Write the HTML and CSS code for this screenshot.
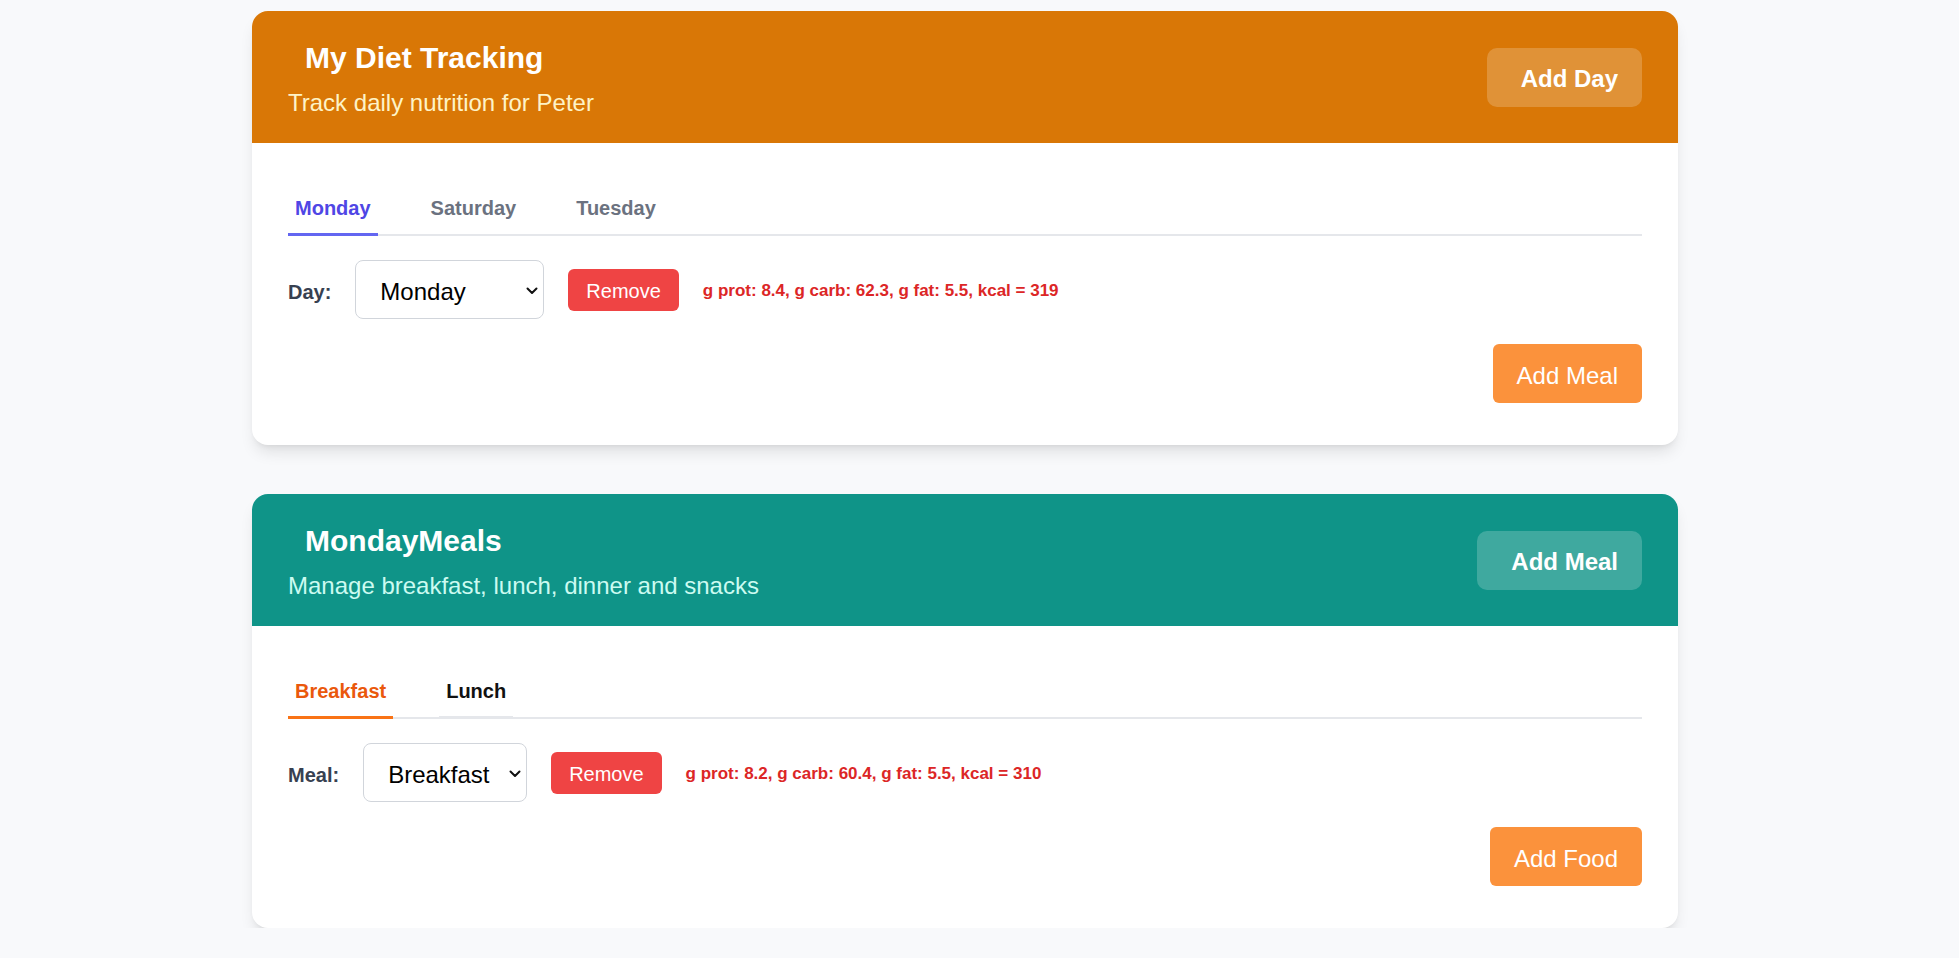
FILE: index.html
```html
<!DOCTYPE html>
<html lang="en">
<head>
<meta charset="utf-8">
<title>My Diet Tracking</title>
<link rel="stylesheet" href="styles.css">
</head>
<body>
<main class="page">
  <section class="card">
    <header class="card-head head-orange">
      <div class="head-text">
        <h1 class="head-title">My Diet Tracking</h1>
        <p class="head-sub sub-amber">Track daily nutrition for Peter</p>
      </div>
      <button class="head-btn" type="button">Add Day</button>
    </header>
    <div class="card-body">
      <nav class="tabs">
        <button class="tab tab-indigo-active" type="button">Monday</button>
        <button class="tab tab-muted" type="button">Saturday</button>
        <button class="tab tab-muted" type="button">Tuesday</button>
      </nav>
      <div class="row">
        <label class="row-label">Day:</label>
        <div class="select-wrap select-day">
          <select class="select">
            <option>Monday</option>
            <option>Tuesday</option>
            <option>Wednesday</option>
            <option>Thursday</option>
            <option>Friday</option>
            <option>Saturday</option>
            <option>Sunday</option>
          </select>
          <svg class="chev" width="12" height="8" viewBox="0 0 12 8"><path d="M1.5 1.5 L6 6 L10.5 1.5" fill="none" stroke="#111" stroke-width="2" stroke-linecap="round" stroke-linejoin="round"/></svg>
        </div>
        <button class="btn-remove" type="button">Remove</button>
        <span class="stats">g prot: 8.4, g carb: 62.3, g fat: 5.5, kcal = 319</span>
      </div>
      <div class="actions">
        <button class="btn-add" type="button">Add Meal</button>
      </div>
    </div>
  </section>

  <section class="card">
    <header class="card-head head-teal">
      <div class="head-text">
        <h1 class="head-title">MondayMeals</h1>
        <p class="head-sub sub-teal">Manage breakfast, lunch, dinner and snacks</p>
      </div>
      <button class="head-btn" type="button">Add Meal</button>
    </header>
    <div class="card-body">
      <nav class="tabs">
        <button class="tab tab-orange-active" type="button">Breakfast</button>
        <button class="tab tab-plain" type="button">Lunch</button>
      </nav>
      <div class="row">
        <label class="row-label">Meal:</label>
        <div class="select-wrap select-meal">
          <select class="select">
            <option>Breakfast</option>
            <option>Lunch</option>
            <option>Dinner</option>
            <option>Snacks</option>
          </select>
          <svg class="chev" width="12" height="8" viewBox="0 0 12 8"><path d="M1.5 1.5 L6 6 L10.5 1.5" fill="none" stroke="#111" stroke-width="2" stroke-linecap="round" stroke-linejoin="round"/></svg>
        </div>
        <button class="btn-remove" type="button">Remove</button>
        <span class="stats">g prot: 8.2, g carb: 60.4, g fat: 5.5, kcal = 310</span>
      </div>
      <div class="actions">
        <button class="btn-add" type="button">Add Food</button>
      </div>
    </div>
  </section>
</main>
</body>
</html>
```

FILE: styles.css
```css
* { box-sizing: border-box; }

html, body {
  margin: 0;
  padding: 0;
  background: #f8f9fb;
  font-family: "Liberation Sans", Arial, sans-serif;
}

.page {
  width: 1426px;
  margin-left: 252px;
  padding-top: 11px;
  display: flex;
  flex-direction: column;
  gap: 49px;
}

.card {
  background: #ffffff;
  border-radius: 16px;
  overflow: hidden;
  box-shadow: 0 10px 15px -3px rgba(0, 0, 0, 0.1), 0 4px 6px -4px rgba(0, 0, 0, 0.1);
}

.card-head {
  height: 132px;
  display: flex;
  align-items: center;
  justify-content: space-between;
  padding: 0 36px;
}

.head-orange { background: #d97706; }
.head-teal { background: #0f9488; }

.head-text {
  display: flex;
  flex-direction: column;
  padding-top: 4px;
}

.head-title {
  margin: 0;
  padding-left: 17px;
  font-size: 30px;
  line-height: 36px;
  font-weight: 700;
  color: #ffffff;
}

.head-sub {
  margin: 11px 0 0;
  font-size: 24px;
  line-height: 32px;
}

.sub-amber { color: #fef3c7; }
.sub-teal { color: #ccfbf1; }

.head-btn {
  height: 59px;
  padding: 4px 24px 0 34px;
  border: none;
  border-radius: 10px;
  background: rgba(255, 255, 255, 0.2);
  color: #ffffff;
  font-family: "Liberation Sans", Arial, sans-serif;
  font-size: 24px;
  font-weight: 700;
}

.card-body {
  padding: 36px 36px 42px;
}

.tabs {
  display: flex;
  gap: 46px;
  border-bottom: 2px solid #e5e7eb;
}

.tab {
  margin-bottom: -2px;
  padding: 15px 7px 11px;
  border: none;
  border-bottom: 3px solid transparent;
  background: none;
  font-family: "Liberation Sans", Arial, sans-serif;
  font-size: 20px;
  line-height: 28px;
  font-weight: 700;
}

.tab-indigo-active { color: #4f46e5; border-bottom-color: #6366f1; }
.tab-muted { color: #6b7280; }
.tab-orange-active { color: #ea580c; border-bottom-color: #f97316; }
.tab-plain { color: #111111; border-bottom-color: #e5e7eb; }

.row {
  margin-top: 24px;
  display: flex;
  align-items: center;
  gap: 24px;
}

.row-label {
  font-size: 20px;
  font-weight: 700;
  color: #374151;
  padding-top: 6px;
}

.select-wrap {
  position: relative;
  height: 59px;
}

.select-day { width: 189px; }
.select-meal { width: 164px; }

.select {
  width: 100%;
  height: 100%;
  appearance: none;
  -webkit-appearance: none;
  border: 1px solid #d1d5db;
  border-radius: 8px;
  background: #ffffff;
  padding: 4px 0 0 24px;
  font-family: "Liberation Sans", Arial, sans-serif;
  font-size: 24px;
  color: #000000;
}

.chev {
  position: absolute;
  right: 6px;
  top: 27px;
  pointer-events: none;
}

.btn-remove {
  height: 42px;
  padding: 4px 18px 0;
  border: none;
  border-radius: 6px;
  background: #ef4444;
  color: #ffffff;
  font-family: "Liberation Sans", Arial, sans-serif;
  font-size: 20px;
}

.stats {
  font-size: 17px;
  font-weight: 700;
  color: #dc2626;
  padding-top: 3px;
}

.actions {
  margin-top: 25px;
  display: flex;
  justify-content: flex-end;
}

.btn-add {
  height: 59px;
  padding: 4px 24px 0;
  border: none;
  border-radius: 6px;
  background: #fb923c;
  color: #ffffff;
  font-family: "Liberation Sans", Arial, sans-serif;
  font-size: 24px;
}
```
